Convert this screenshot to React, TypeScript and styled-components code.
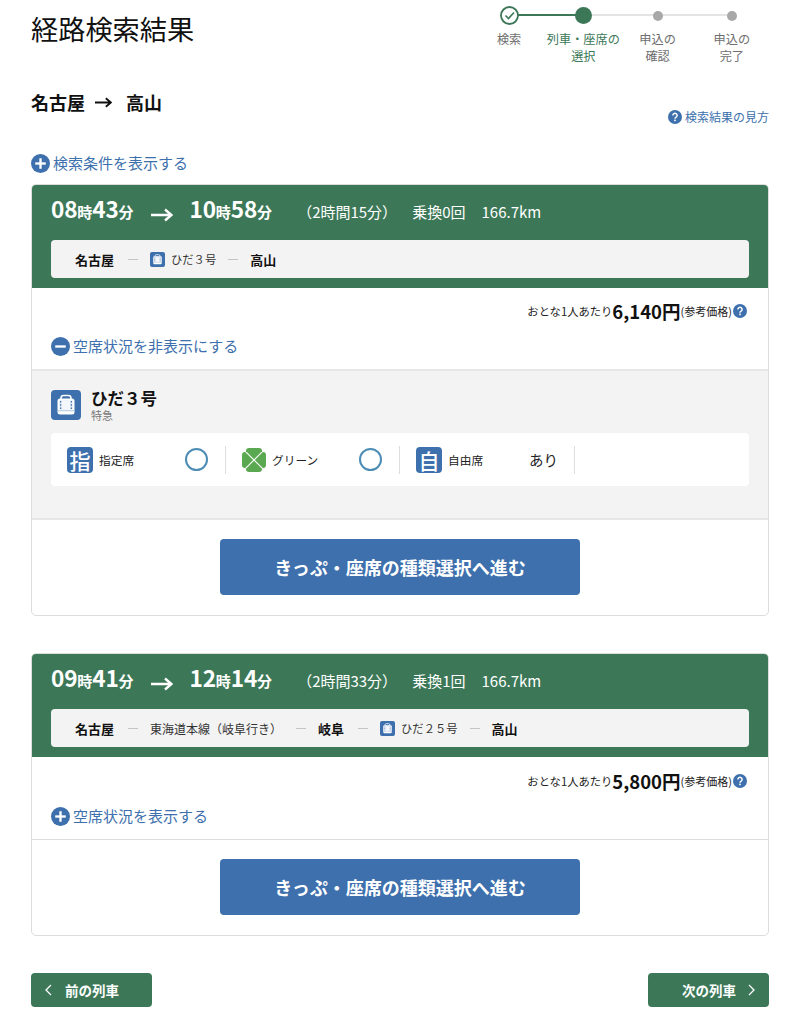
import React from "react";
import styled, { createGlobalStyle } from "styled-components";

const GREEN = "#3c7857";
const BLUE = "#3d70ad";

const GlobalStyle = createGlobalStyle`
  html, body { margin: 0; padding: 0; background: #fff; }
  body {
    font-family: "Noto Sans CJK JP", "Noto Sans", sans-serif;
    color: #111;
  }
  * { box-sizing: border-box; }
`;

const Page = styled.div`
  width: 789px;
  height: 1024px;
  padding: 0 20px 0 31px;
  overflow: hidden;
`;

// Top
const TopRow = styled.div`
  display: flex;
  justify-content: space-between;
  height: 88px;
`;
const Title = styled.h1`
  margin: 9px 0 0;
  font-size: 27.2px;
  line-height: 38px;
  font-weight: 400;
`;
const Stepper = styled.div`
  display: grid;
  grid-template-columns: repeat(4, 74.25px);
  padding-top: 6px;
`;
const Step = styled.div<{ $state: string; $line?: string }>`
  position: relative;
  display: flex;
  flex-direction: column;
  align-items: center;
  color: ${({ $state }) => ($state === "now" ? GREEN : "#6e6e6e")};
  &::before {
    content: "";
    display: ${({ $line }) => ($line ? "block" : "none")};
    position: absolute;
    top: 8px;
    right: 50%;
    width: 100%;
    height: 2px;
    background: ${({ $line }) => ($line === "on" ? GREEN : "#e4e4e4")};
  }
`;
const NodeBox = styled.div`
  position: relative;
  z-index: 1;
  height: 19px;
  display: flex;
  align-items: center;
  justify-content: center;
`;
const Dot = styled.div<{ $size: number; $color: string }>`
  width: ${({ $size }) => $size}px;
  height: ${({ $size }) => $size}px;
  border-radius: 50%;
  background: ${({ $color }) => $color};
`;
const StepLabel = styled.div`
  margin-top: 6px;
  font-size: 12.2px;
  line-height: 17px;
  text-align: center;
  white-space: pre-line;
`;

const RouteRow = styled.div`
  display: flex;
  justify-content: space-between;
  align-items: flex-end;
  height: 37px;
`;
const RouteTitle = styled.div`
  display: flex;
  align-items: center;
  font-size: 18px;
  line-height: 30px;
  font-weight: 700;
  margin-bottom: 8px;
`;
const RouteArrow = styled.span`
  display: flex;
  margin: 0 14px 0 10px;
`;
const HelpLink = styled.a`
  display: flex;
  align-items: center;
  gap: 3px;
  font-size: 12px;
  line-height: 18px;
  margin-bottom: -1px;
  color: ${BLUE};
`;
const Toggle = styled.div`
  display: flex;
  align-items: center;
  gap: 3px;
  font-size: 15px;
  line-height: 20px;
  height: 20px;
  color: ${BLUE};
`;
const ConditionRow = styled.div`
  margin-top: 28px;
  margin-bottom: 11px;
`;

// Card
const Card = styled.section`
  border: 1px solid #dcdcdc;
  border-radius: 5px;
  overflow: hidden;
  & + & { margin-top: 37px; }
`;
const CardHead = styled.div`
  background: ${GREEN};
  height: 103px;
  padding: 0 19px;
`;
const TimeRow = styled.div`
  display: flex;
  align-items: baseline;
  height: 55px;
  padding-top: 5.5px;
  color: #fff;
`;
const Clock = styled.span`
  font-size: 22.6px;
  line-height: 36px;
  font-weight: 700;
  letter-spacing: -0.2px;
  small { font-size: 15px; font-weight: 700; letter-spacing: 0; }
`;
const TimeArrow = styled.span`
  display: flex;
  margin: 0 17px;
  align-self: center;
`;
const Meta = styled.span<{ $left: number }>`
  font-size: 15px;
  margin-left: ${({ $left }) => $left}px;
`;
const RoutePill = styled.div`
  height: 38px;
  padding: 0 24px;
  display: flex;
  align-items: center;
  background: #f3f3f3;
  border-radius: 4px;
  font-size: 12px;
  color: #222;
`;
const Station = styled.b`
  font-size: 13px;
  font-weight: 700;
  color: #111;
`;
const Dash = styled.i`
  width: 10px;
  height: 1px;
  margin: 0 12px 0 14px;
  background: #c4c4c4;
`;
const Line = styled.span`
  display: flex;
  align-items: center;
  gap: 6px;
  color: #333;
`;
const TrainLine = styled(Line)`
  font-size: 11.3px;
  margin-right: -2px;
`;
const PriceRow = styled.div<{ $top: number }>`
  display: flex;
  align-items: center;
  justify-content: flex-end;
  height: 24px;
  margin-top: ${({ $top }) => $top}px;
  padding-right: 21px;
  font-size: 11.3px;
  color: #222;
  strong {
    font-size: 18.5px;
    line-height: 24px;
    font-weight: 700;
    color: #111;
  }
  span { font-size: 11px; margin-right: 1px; }
`;
const ToggleRow = styled.div`
  padding: 13px 19px 0;
  height: 46px;
`;
const Seats = styled.div`
  background: #f3f3f3;
  border-top: 2px solid #e6e6e6;
  border-bottom: 2px solid #e6e6e6;
  height: 151px;
  padding: 18px 19px 0;
`;
const TrainHead = styled.div`
  display: flex;
  align-items: center;
  gap: 10px;
  height: 32px;
`;
const TrainName = styled.div`
  font-size: 16.5px;
  line-height: 20px;
  font-weight: 700;
  small {
    display: block;
    font-size: 11px;
    line-height: 13px;
    margin-top: 1px;
    font-weight: 400;
    color: #777;
  }
`;
const SeatPanel = styled.div`
  margin-top: 12px;
  height: 53px;
  background: #fff;
  border-radius: 4px;
  display: flex;
  align-items: center;
  padding-left: 16px;
`;
const SeatCell = styled.div`
  display: flex;
  align-items: center;
  width: 159px;
  height: 28px;
  padding-right: 17px;
  border-right: 1px solid #dedede;
  & + & { margin-left: 16px; width: 158px; }
  & + & + & { width: 159px; padding-right: 16px; }
`;
const SeatName = styled.span`
  margin-left: 6px;
  font-size: 11.7px;
  color: #222;
  flex: 1;
`;
const Badge = styled.div`
  width: 26px;
  height: 26px;
  border-radius: 4px;
  background: ${BLUE};
  color: #fff;
  font-size: 21px;
  line-height: 26px;
  font-weight: 500;
  text-align: center;
`;
const Ring = styled.div`
  width: 23px;
  height: 23px;
  border-radius: 50%;
  border: 2px solid #4d8db5;
`;
const Avail = styled.span`
  font-size: 14.5px;
  color: #222;
`;
const ButtonRow = styled.div`
  display: flex;
  justify-content: center;
  padding: 19px 0 20px;
`;
const MainButton = styled.button`
  width: 360px;
  height: 56px;
  border: 0;
  border-radius: 4px;
  background: ${BLUE};
  color: #fff;
  font-family: inherit;
  font-size: 18px;
  font-weight: 700;
`;
const Divider = styled.div`
  border-top: 1px solid #dcdcdc;
`;

// Pager
const Pager = styled.div`
  display: flex;
  justify-content: space-between;
  margin-top: 37px;
`;
const PagerButton = styled.button<{ $next?: boolean }>`
  width: 121px;
  height: 34px;
  border: 0;
  border-radius: 4px;
  background: ${GREEN};
  color: #fff;
  font-family: inherit;
  font-size: 13.5px;
  font-weight: 700;
  display: flex;
  align-items: center;
  justify-content: ${({ $next }) => ($next ? "flex-end" : "flex-start")};
  gap: ${({ $next }) => ($next ? 12 : 13)}px;
  padding: 0 14px;
`;

const CircleIcon = ({ kind, size = 19 }: { kind: "plus" | "minus"; size?: number }) => (
  <svg width={size} height={size} viewBox="0 0 18 18">
    <circle cx="9" cy="9" r="9" fill={BLUE} />
    <rect x="4" y="7.9" width="10" height="2.2" fill="#fff" />
    {kind === "plus" && <rect x="7.9" y="4" width="2.2" height="10" fill="#fff" />}
  </svg>
);

const HelpIcon = ({ size = 14 }: { size?: number }) => (
  <svg width={size} height={size} viewBox="0 0 14 14">
    <circle cx="7" cy="7" r="7" fill={BLUE} />
    <path d="M4.9 5.4a2.1 2.1 0 1 1 3.2 1.8c-.7.4-1.1.8-1.1 1.5" fill="none" stroke="#fff" strokeWidth="1.5" />
    <rect x="6.2" y="9.6" width="1.6" height="1.6" fill="#fff" />
  </svg>
);

const Arrow = ({ width, height }: { width: number; height: number }) => (
  <svg width={width} height={height} viewBox="0 0 22 14">
    <path d="M0 7h20M14 1.5 20.5 7 14 12.5" fill="none" stroke="currentColor" strokeWidth="2.4" />
  </svg>
);

const TrainIcon = ({ size }: { size: number }) => (
  <svg width={size} height={size} viewBox="0 0 30 30">
    <rect width="30" height="30" rx="4" fill={BLUE} />
    <path d="M10 9V8q0-2.6 2.6-2.6h4.8Q20 5.4 20 8v1" fill="none" stroke="#fff" strokeWidth="1.5" />
    <rect x="6.5" y="8.5" width="17" height="16" rx="2.5" fill="#fff" />
    <rect x="8.5" y="10.5" width="13" height="9" fill="#dbe5f1" />
    <rect x="10.8" y="10.5" width="8.4" height="9" fill="#f3f6fa" />
    <path d="M9.6 11v8M20.4 11v8" stroke={BLUE} strokeWidth="1.2" strokeDasharray="1.6 1.6" />
    <rect x="6.5" y="20.4" width="17" height="0.8" fill="#9db8d6" />
  </svg>
);

const CloverIcon = () => (
  <svg width="24" height="24" viewBox="0 0 24 24">
    {[0, 90, 180, 270].map((r) => (
      <path
        key={r}
        d="M12 11.2 4 3.2V3q0-3 3-3h10q3 0 3 3v.2z"
        fill="#5aa84f"
        transform={`rotate(${r} 12 12)`}
      />
    ))}
  </svg>
);

const Chevron = ({ dir }: { dir: "left" | "right" }) => (
  <svg width="7" height="12" viewBox="0 0 7 12">
    <path d={dir === "left" ? "M6 1 1 6l5 5" : "M1 1l5 5-5 5"} fill="none" stroke="#fff" strokeWidth="1.3" />
  </svg>
);

const steps = [
  { label: "検索", state: "done" },
  { label: "列車・座席の\n選択", state: "now", line: "on" },
  { label: "申込の\n確認", state: "todo", line: "off" },
  { label: "申込の\n完了", state: "todo", line: "off" },
];

const Time = ({ h, m }: { h: string; m: string }) => (
  <Clock>
    {h}
    <small>時</small>
    {m}
    <small>分</small>
  </Clock>
);

const Head = ({ from, to, total, transfer, children }: {
  from: string[];
  to: string[];
  total: string;
  transfer: string;
  children: React.ReactNode;
}) => (
  <CardHead>
    <TimeRow>
      <Time h={from[0]} m={from[1]} />
      <TimeArrow>
        <Arrow width={22} height={14} />
      </TimeArrow>
      <Time h={to[0]} m={to[1]} />
      <Meta $left={25}>（2時間{total}分）</Meta>
      <Meta $left={15}>乗換{transfer}回</Meta>
      <Meta $left={16}>166.7km</Meta>
    </TimeRow>
    <RoutePill>{children}</RoutePill>
  </CardHead>
);

const Price = ({ value, top }: { value: string; top: number }) => (
  <PriceRow $top={top}>
    おとな1人あたり<strong>{value}円</strong>
    <span>(参考価格)</span>
    <HelpIcon />
  </PriceRow>
);

const Proceed = () => (
  <ButtonRow>
    <MainButton>きっぷ・座席の種類選択へ進む</MainButton>
  </ButtonRow>
);

export default function App() {
  return (
    <Page>
      <GlobalStyle />
      <TopRow>
        <Title>経路検索結果</Title>
        <Stepper>
          {steps.map((s) => (
            <Step key={s.label} $state={s.state} $line={s.line}>
              <NodeBox>
                {s.state === "done" && (
                  <svg width="19" height="19" viewBox="0 0 19 19">
                    <circle cx="9.5" cy="9.5" r="8.5" fill="#fff" stroke={GREEN} strokeWidth="1.8" />
                    <path d="M5.5 9.5l3 3 5.5-6" fill="none" stroke={GREEN} strokeWidth="1.6" />
                  </svg>
                )}
                {s.state === "now" && <Dot $size={17} $color={GREEN} />}
                {s.state === "todo" && <Dot $size={10} $color="#a8a8a8" />}
              </NodeBox>
              <StepLabel>{s.label}</StepLabel>
            </Step>
          ))}
        </Stepper>
      </TopRow>

      <RouteRow>
        <RouteTitle>
          名古屋
          <RouteArrow>
            <Arrow width={17} height={11} />
          </RouteArrow>
          高山
        </RouteTitle>
        <HelpLink>
          <HelpIcon />
          検索結果の見方
        </HelpLink>
      </RouteRow>

      <ConditionRow>
        <Toggle>
          <CircleIcon kind="plus" />
          検索条件を表示する
        </Toggle>
      </ConditionRow>

      <Card>
        <Head from={["08", "43"]} to={["10", "58"]} total="15" transfer="0">
          <Station>名古屋</Station>
          <Dash />
          <TrainLine>
            <TrainIcon size={15} />
            ひだ３号
          </TrainLine>
          <Dash />
          <Station>高山</Station>
        </Head>
        <Price value="6,140" top={11} />
        <ToggleRow>
          <Toggle>
            <CircleIcon kind="minus" />
            空席状況を非表示にする
          </Toggle>
        </ToggleRow>
        <Seats>
          <TrainHead>
            <TrainIcon size={30} />
            <TrainName>
              ひだ３号
              <small>特急</small>
            </TrainName>
          </TrainHead>
          <SeatPanel>
            <SeatCell>
              <Badge>指</Badge>
              <SeatName>指定席</SeatName>
              <Ring />
            </SeatCell>
            <SeatCell>
              <CloverIcon />
              <SeatName>グリーン</SeatName>
              <Ring />
            </SeatCell>
            <SeatCell>
              <Badge>自</Badge>
              <SeatName>自由席</SeatName>
              <Avail>あり</Avail>
            </SeatCell>
          </SeatPanel>
        </Seats>
        <Proceed />
      </Card>

      <Card>
        <Head from={["09", "41"]} to={["12", "14"]} total="33" transfer="1">
          <Station>名古屋</Station>
          <Dash />
          <Line>東海道本線（岐阜行き）</Line>
          <Dash />
          <Station>岐阜</Station>
          <Dash />
          <TrainLine>
            <TrainIcon size={15} />
            ひだ２５号
          </TrainLine>
          <Dash />
          <Station>高山</Station>
        </Head>
        <Price value="5,800" top={12} />
        <ToggleRow>
          <Toggle>
            <CircleIcon kind="plus" />
            空席状況を表示する
          </Toggle>
        </ToggleRow>
        <Divider />
        <Proceed />
      </Card>

      <Pager>
        <PagerButton>
          <Chevron dir="left" />
          前の列車
        </PagerButton>
        <PagerButton $next>
          次の列車
          <Chevron dir="right" />
        </PagerButton>
      </Pager>
    </Page>
  );
}
